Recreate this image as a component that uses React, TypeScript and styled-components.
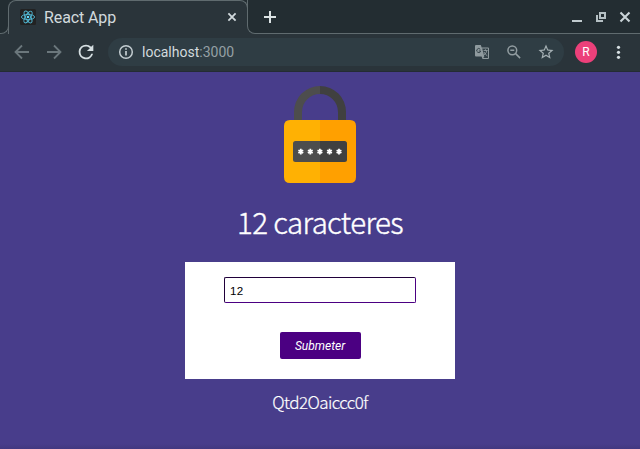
import React from 'react';
import styled, { createGlobalStyle } from 'styled-components';

const line = '#606b6f';
const chrome = '#2a343a';
const strip = '#232d32';

const GlobalStyle = createGlobalStyle`
  * { box-sizing: border-box; }
  html, body { margin: 0; height: 100%; background: #483d8b; overflow: hidden; }
`;

const Window = styled.div`
  display: flex;
  flex-direction: column;
  width: 640px;
  height: 449px;
  overflow: hidden;
  font-family: Roboto, 'Liberation Sans', sans-serif;
`;

const TabStrip = styled.header`
  display: flex;
  flex: none;
  height: 34px;
  background: ${strip};
`;

const StripEdge = styled.div<{ $side: 'left' | 'right' }>`
  flex: ${({ $side }) => ($side === 'left' ? '0 0 9px' : '1')};
  margin-${({ $side }) => ($side === 'left' ? 'right' : 'left')}: -1px;
  background: ${chrome};
  display: flex;
`;

const StripFill = styled.div<{ $side: 'left' | 'right' }>`
  flex: 1;
  display: flex;
  align-items: center;
  background: ${strip};
  border-bottom: 1px solid ${line};
  border-${({ $side }) => ($side === 'left' ? 'right' : 'left')}: 1px solid ${line};
  border-bottom-${({ $side }) => ($side === 'left' ? 'right' : 'left')}-radius: 8px;
  padding-left: ${({ $side }) => ($side === 'left' ? 0 : '15px')};
`;

const TabHolder = styled.div`
  width: 240px;
  height: 34px;
  background: linear-gradient(${strip} 15px, ${chrome} 15px);
`;

const Tab = styled.div`
  display: flex;
  align-items: center;
  width: 240px;
  height: 34px;
  padding: 0 9px 1px 11px;
  background: ${chrome};
  border: 1px solid ${line};
  border-bottom: 0;
  border-radius: 8px 8px 0 0;
`;

const TabTitle = styled.span`
  flex: 1;
  margin-left: 8px;
  padding-top: 2px;
  color: #d2dadd;
  font-size: 16px;
  line-height: 20px;
  letter-spacing: -0.1px;
`;

const Favicon = styled.svg`
  flex: none;
  display: block;
`;

const WindowControls = styled.div`
  display: flex;
  align-items: center;
  margin-left: auto;
  padding-right: 9px;
  gap: 0;
`;

const Toolbar = styled.nav`
  display: flex;
  flex: none;
  align-items: center;
  height: 38px;
  padding: 0 0 1px 12px;
  background: ${chrome};
  border-bottom: 1px solid #242c34;
`;

const Icon = styled.svg<{ $gap?: number }>`
  display: block;
  flex: none;
  margin-left: ${({ $gap = 0 }) => $gap}px;
`;

const AddressBar = styled.div`
  display: flex;
  align-items: center;
  width: 456px;
  height: 28px;
  margin-left: 11px;
  padding: 0 9px 0 8px;
  border-radius: 14px;
  background: #2f3d44;
`;

const Address = styled.span`
  flex: 1;
  margin-left: 6px;
  color: #d2dadd;
  font-size: 14px;
  line-height: 20px;
`;

const Port = styled.span`
  color: #95a0a4;
`;

const Avatar = styled.div`
  display: flex;
  align-items: center;
  justify-content: center;
  width: 22px;
  height: 22px;
  margin-left: 11px;
  border-radius: 50%;
  background: #ec407a;
  color: #fff;
  font-size: 12px;
`;

const Page = styled.main`
  display: flex;
  flex: 1;
  flex-direction: column;
  align-items: center;
  padding-top: 14px;
  background: linear-gradient(#483d8b calc(100% - 5px), #42387f);
`;

const Title = styled.h1`
  margin: 13px 0 17px;
  height: 48px;
  line-height: 48px;
  color: #fff;
  font-family: 'Noto Sans CJK SC', 'Noto Sans', sans-serif;
  font-size: 29.5px;
  font-weight: 300;
  letter-spacing: -0.65px;
  white-space: nowrap;
  -webkit-text-stroke: 0.4px #fff;
`;

const Form = styled.form`
  display: flex;
  flex-direction: column;
  align-items: center;
  width: 270px;
  height: 117px;
  padding-top: 15px;
  background: #fff;
`;

const LengthInput = styled.input`
  width: 192px;
  height: 26px;
  padding: 0 5px;
  border: 1px solid #4b0082;
  border-top-color: #20003a;
  border-left-color: #20003a;
  border-radius: 2px;
  outline: none;
  background: #fff;
  color: #000;
  font: 11.6px 'Liberation Sans', Arial, sans-serif;
  letter-spacing: 0.4px;
`;

const SubmitButton = styled.button`
  width: 81px;
  height: 27px;
  margin-top: 29px;
  padding: 0;
  border: 0;
  border-radius: 2px;
  background: #4b0082;
  color: #fff;
  font: italic 12px Roboto, sans-serif;
`;

const Password = styled.p`
  margin: 9px 0 0;
  height: 28px;
  line-height: 28px;
  color: #fff;
  font-family: 'Noto Sans CJK SC', 'Noto Sans', sans-serif;
  font-size: 17px;
  font-weight: 300;
  letter-spacing: -0.57px;
  -webkit-text-stroke: 0.2px #fff;
`;

const ReactMark = () => (
  <Favicon width="16" height="16" viewBox="0 0 16 16">
    <rect width="16" height="16" rx="1.5" fill="#222" />
    <g fill="none" stroke="#52b9d5" strokeWidth="0.9">
      {[0, 60, 120].map((a) => (
        <ellipse key={a} cx="8" cy="8" rx="6.6" ry="2.6" transform={`rotate(${a} 8 8)`} />
      ))}
    </g>
    <circle cx="8" cy="8" r="1.3" fill="#61dafb" />
  </Favicon>
);

const Padlock = () => (
  <Icon width="72" height="98" viewBox="0 0 72 98">
    <path d="M10 38V26A26 26 0 0 1 36 0V8A18 18 0 0 0 18 26V38Z" fill="#4d4d4d" />
    <path d="M62 38V26A26 26 0 0 0 36 0V8A18 18 0 0 1 54 26V38Z" fill="#404040" />
    <path d="M36 34H6Q0 34 0 40V91Q0 97 6 97H36Z" fill="#ffb103" />
    <path d="M36 34H66Q72 34 72 40V91Q72 97 66 97H36Z" fill="#ffa000" />
    <path d="M36 55H11.500Q9 55 9 57.500V73.500Q9 76 11.500 76H36Z" fill="#4d4d4d" />
    <path d="M36 55H60.500Q63 55 63 57.500V73.500Q63 76 60.500 76H36Z" fill="#404040" />
    <g stroke="#fff" strokeWidth="1.8">
      {[16.8, 26.300, 35.900, 45.500, 55].map((x) => (
        <path key={x} d={`M${x} 62.800v5.600M${x - 2.400} 64.200l4.800 2.800M${x - 2.400} 67l4.800 -2.800`} />
      ))}
    </g>
  </Icon>
);

export default function App() {
  return (
    <Window>
      <GlobalStyle />
      <TabStrip>
        <StripEdge $side="left"><StripFill $side="left" /></StripEdge>
        <TabHolder>
          <Tab>
            <ReactMark />
            <TabTitle>React App</TabTitle>
            <Icon width="12" height="12" viewBox="0 0 12 12" stroke="#d2dadd" strokeWidth="1.8">
              <path d="M2.400 2.400l7.200 7.200M9.600 2.400l-7.200 7.200" />
            </Icon>
          </Tab>
        </TabHolder>
        <StripEdge $side="right">
          <StripFill $side="right">
            <Icon width="14" height="14" viewBox="0 0 14 14" stroke="#dce3e5" strokeWidth="2">
              <path d="M7 1v12M1 7h12" />
            </Icon>
            <WindowControls>
              <Icon width="10" height="12" viewBox="0 0 10 12" fill="#c1cbcf">
                <path d="M0 9h10v2H0z" />
              </Icon>
              <Icon $gap={14} width="10" height="12" viewBox="0 0 10 12" fill="none" stroke="#b5c0c4" strokeWidth="2">
                <path d="M4 2h5v5H4zM1 4v6h6" />
              </Icon>
              <Icon $gap={13} width="12" height="12" viewBox="0 0 12 12" stroke="#c9d3d7" strokeWidth="2.100">
                <path d="M1.500 1.500l9 9M10.500 1.500l-9 9" />
              </Icon>
            </WindowControls>
          </StripFill>
        </StripEdge>
      </TabStrip>
      <Toolbar>
        <Icon width="20" height="20" viewBox="0 0 20 20" fill="none" stroke="#6b777c" strokeWidth="1.800">
          <path d="M17 10H4.500M10 3.500L3.500 10l6.500 6.500" />
        </Icon>
        <Icon $gap={12} width="20" height="20" viewBox="0 0 20 20" fill="none" stroke="#6b777c" strokeWidth="1.800">
          <path d="M3 10h12.500M10 3.500l6.500 6.500-6.500 6.500" />
        </Icon>
        <Icon $gap={11} width="22" height="22" viewBox="0 0 24 24" fill="#d6dfe2">
          <path d="M17.650 6.350A7.958 7.958 0 0 0 12 4a8 8 0 1 0 7.730 10h-2.080A6 6 0 1 1 12 6c1.660 0 3.140.690 4.220 1.780L13 11h7V4z" />
        </Icon>
        <AddressBar>
          <Icon width="20" height="20" viewBox="0 0 20 20" fill="none" stroke="#c3cdd1" strokeWidth="1.500">
            <circle cx="10" cy="10" r="6.300" />
            <path d="M10 9v4.500M10 6.200v1.600" strokeWidth="1.700" />
          </Icon>
          <Address>localhost<Port>:3000</Port></Address>
          <Icon width="16" height="16" viewBox="0 0 16 16">
            <path d="M2 1h4.800l.9 2.500H14Q15 3.500 15 4.500V14Q15 15 14 15H8.500l-.9-2.500H2Q1 12.500 1 11.500V2Q1 1 2 1z" fill="#8f9a9e" />
            <path d="M8.200 4.500H14V14H9.300l1-1.700z" fill="#344249" />
            <path d="M6.300 5.300A2 2 0 1 0 6.700 7H4.900" fill="none" stroke="#344249" strokeWidth="1" />
            <path d="M9.600 6.500h4M11.500 5.300v1.200M10.200 11q2.300-2 2.600-4.500M10 8q1 2.300 3.300 3.800" fill="none" stroke="#8f9a9e" strokeWidth=".9" />
          </Icon>
          <Icon $gap={16} width="16" height="16" viewBox="0 0 16 16" fill="none" stroke="#929da1" strokeWidth="1.500">
            <circle cx="6.300" cy="6.300" r="4.400" />
            <path d="M4.300 6.300h4M9.600 9.600l4.500 4.500" />
          </Icon>
          <Icon $gap={15} width="18" height="18" viewBox="0 0 24 24" fill="#a5b0b4">
            <path d="M22 9.240l-7.190-.620L12 2 9.190 8.630 2 9.240l5.460 4.730L5.820 21 12 17.270 18.180 21l-1.630-7.030L22 9.240zM12 15.400l-3.760 2.270 1-4.280-3.320-2.880 4.380-.380L12 6.100l1.710 4.040 4.380.380-3.320 2.880 1 4.280L12 15.400z" />
          </Icon>
        </AddressBar>
        <Avatar>R</Avatar>
        <Icon $gap={19} width="5" height="16" viewBox="0 0 5 16" fill="#d6dfe2">
          <circle cx="2.500" cy="3.300" r="1.600" />
          <circle cx="2.500" cy="8.300" r="1.600" />
          <circle cx="2.500" cy="13.300" r="1.600" />
        </Icon>
      </Toolbar>
      <Page>
        <Padlock />
        <Title>12 caracteres</Title>
        <Form onSubmit={(e) => e.preventDefault()}>
          <LengthInput defaultValue="12" />
          <SubmitButton>Submeter</SubmitButton>
        </Form>
        <Password>Qtd2Oaiccc0f</Password>
      </Page>
    </Window>
  );
}
